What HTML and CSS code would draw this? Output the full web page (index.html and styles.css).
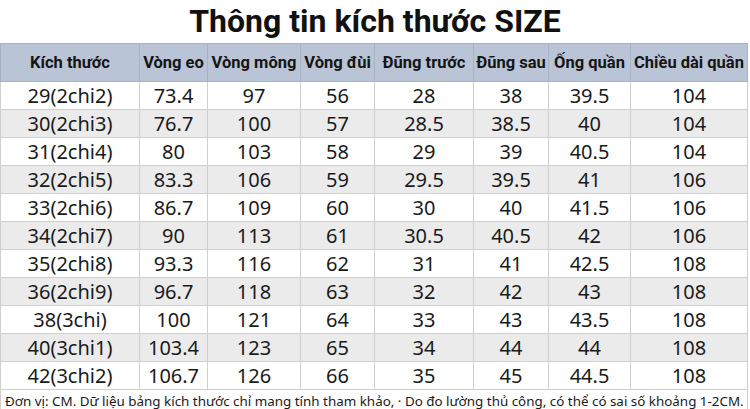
FILE: index.html
```html
<!DOCTYPE html>
<html lang="vi">
<head>
<meta charset="utf-8">
<title>Thông tin kích thước SIZE</title>
<link rel="stylesheet" href="styles.css">
</head>
<body>
<div class="sheet">
  <h1 class="title">Thông tin kích thước SIZE</h1>
  <table class="size-table">
    <colgroup>
      <col class="c1"><col class="c2"><col class="c3"><col class="c4">
      <col class="c5"><col class="c6"><col class="c7"><col class="c8">
    </colgroup>
    <thead>
      <tr>
        <th>Kích thước</th><th>Vòng eo</th><th>Vòng mông</th><th>Vòng đùi</th>
        <th>Đũng trước</th><th>Đũng sau</th><th>Ống quần</th><th>Chiều dài quần</th>
      </tr>
    </thead>
    <tbody>
      <tr><td>29(2chi2)</td><td>73.4</td><td>97</td><td>56</td><td>28</td><td>38</td><td>39.5</td><td>104</td></tr>
      <tr><td>30(2chi3)</td><td>76.7</td><td>100</td><td>57</td><td>28.5</td><td>38.5</td><td>40</td><td>104</td></tr>
      <tr><td>31(2chi4)</td><td>80</td><td>103</td><td>58</td><td>29</td><td>39</td><td>40.5</td><td>104</td></tr>
      <tr><td>32(2chi5)</td><td>83.3</td><td>106</td><td>59</td><td>29.5</td><td>39.5</td><td>41</td><td>106</td></tr>
      <tr><td>33(2chi6)</td><td>86.7</td><td>109</td><td>60</td><td>30</td><td>40</td><td>41.5</td><td>106</td></tr>
      <tr><td>34(2chi7)</td><td>90</td><td>113</td><td>61</td><td>30.5</td><td>40.5</td><td>42</td><td>106</td></tr>
      <tr><td>35(2chi8)</td><td>93.3</td><td>116</td><td>62</td><td>31</td><td>41</td><td>42.5</td><td>108</td></tr>
      <tr><td>36(2chi9)</td><td>96.7</td><td>118</td><td>63</td><td>32</td><td>42</td><td>43</td><td>108</td></tr>
      <tr><td>38(3chi)</td><td>100</td><td>121</td><td>64</td><td>33</td><td>43</td><td>43.5</td><td>108</td></tr>
      <tr><td>40(3chi1)</td><td>103.4</td><td>123</td><td>65</td><td>34</td><td>44</td><td>44</td><td>108</td></tr>
      <tr><td>42(3chi2)</td><td>106.7</td><td>126</td><td>66</td><td>35</td><td>45</td><td>44.5</td><td>108</td></tr>
    </tbody>
    <tfoot>
      <tr><td colspan="8" class="note">Đơn vị: CM. Dữ liệu bảng kích thước chỉ mang tính tham khảo, · Do đo lường thủ công, có thể có sai số khoảng 1-2CM.</td></tr>
    </tfoot>
  </table>
</div>
</body>
</html>
```

FILE: styles.css
```css
html, body {
  margin: 0;
  padding: 0;
  background: #ffffff;
}

.sheet {
  width: 750px;
  height: 409px;
  overflow: hidden;
}

.title {
  margin: 0;
  height: 43px;
  line-height: 42px;
  text-align: center;
  font-family: "Roboto", "Liberation Sans", sans-serif;
  font-weight: 700;
  font-size: 32px;
  color: #111111;
}

.size-table {
  width: 747px;
  table-layout: fixed;
  border-collapse: collapse;
  font-family: "Noto Sans", "Open Sans", sans-serif;
  color: #1a1a1a;
}

.c1 { width: 139px; }
.c2 { width: 68px; }
.c3 { width: 93px; }
.c4 { width: 74px; }
.c5 { width: 99px; }
.c6 { width: 75px; }
.c7 { width: 82px; }
.c8 { width: 117px; }

.size-table th {
  background: #b9c4d6;
  height: 37px;
  padding: 0;
  font-family: "Roboto", "Liberation Sans", sans-serif;
  font-weight: 700;
  font-size: 16.5px;
  color: #151515;
  border: 1px solid #a9b3c3;
  white-space: nowrap;
}

.size-table td {
  height: 27px;
  padding: 0;
  text-align: center;
  font-size: 20px;
  line-height: 26px;
  border: 1px solid #cfcfcf;
  white-space: nowrap;
}

.size-table tbody tr:nth-child(even) td {
  background: #ebebeb;
}

.size-table td.note {
  text-align: left;
  font-size: 13.4px;
  line-height: 17px;
  height: 19px;
  padding: 3px 0 0 4px;
  vertical-align: top;
  color: #1a1a1a;
}
```
